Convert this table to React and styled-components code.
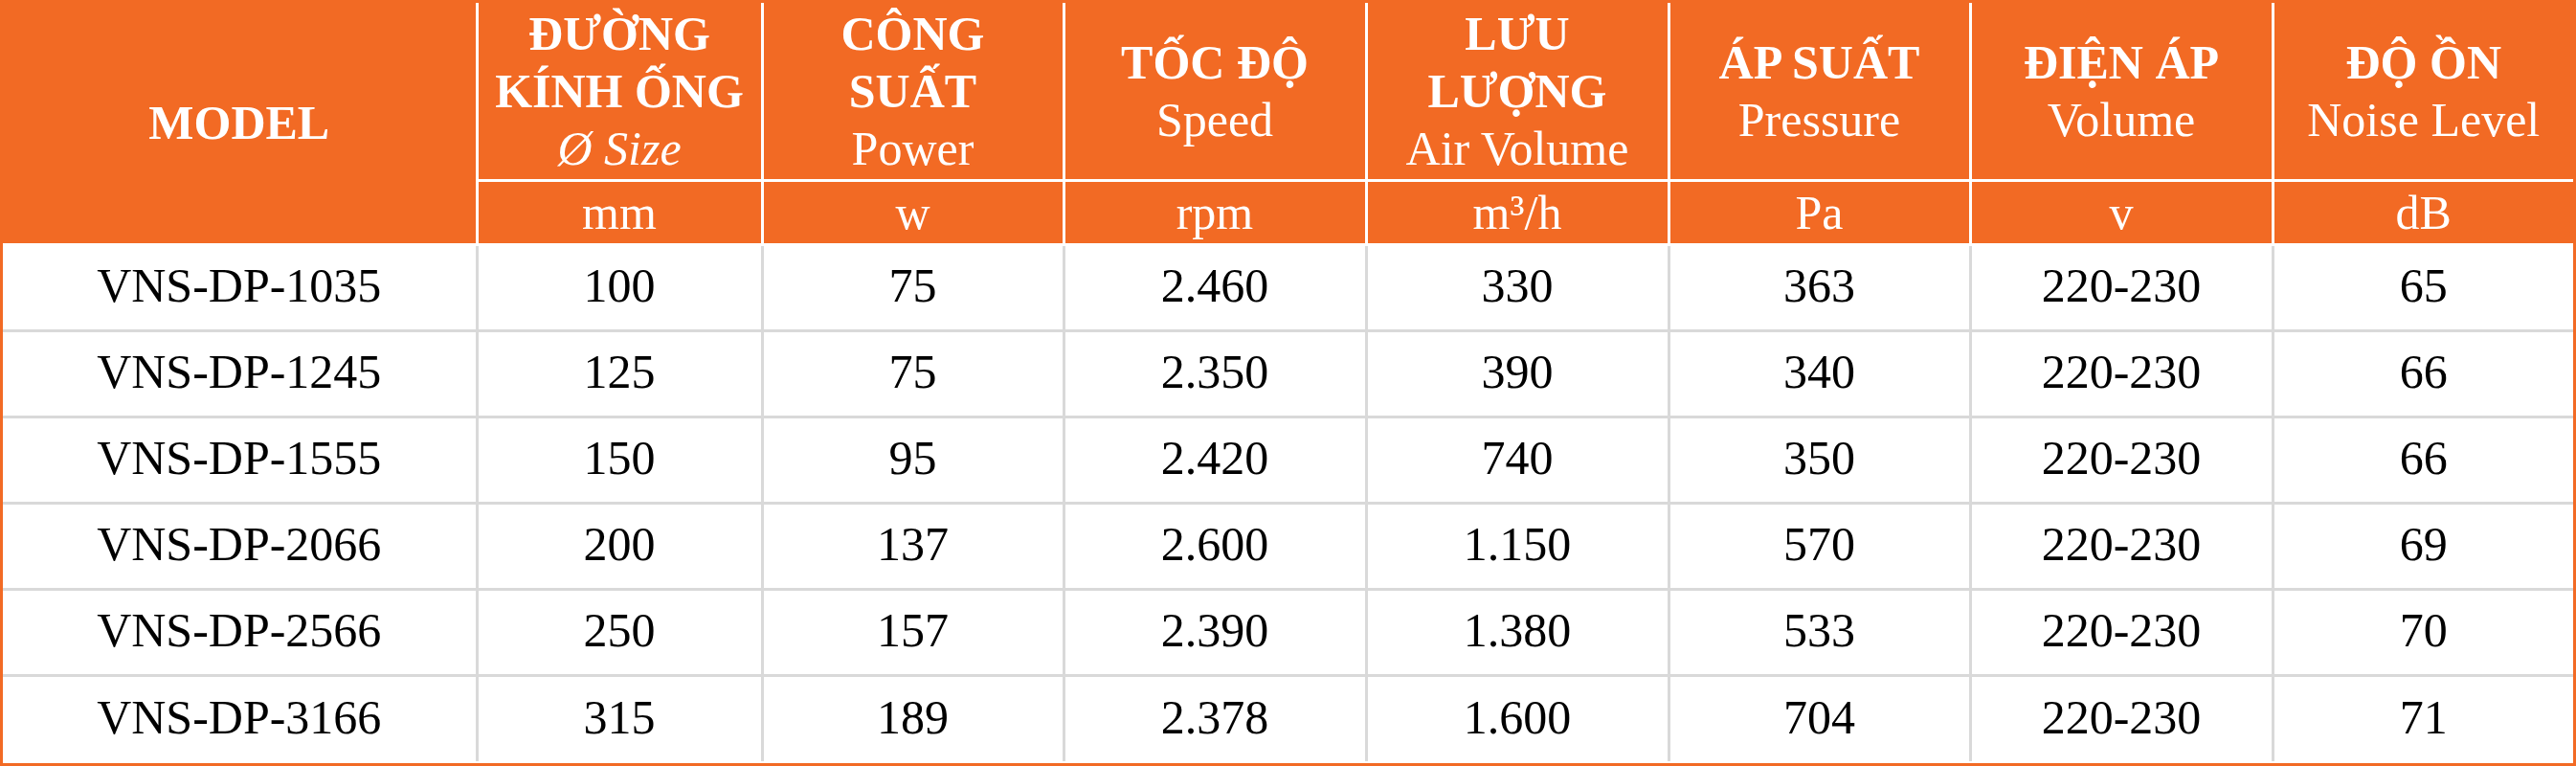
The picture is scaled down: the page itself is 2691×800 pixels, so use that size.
import React from "react";
import styled, { createGlobalStyle } from "styled-components";

const ORANGE = "#f26a24";
const GRID = "#d9d9d9";

const GlobalStyle = createGlobalStyle`
  html, body {
    margin: 0;
    padding: 0;
    background: #ffffff;
  }
`;

const columns = [495, 298, 315, 316, 316, 315, 316, 314];

const heads = [
  { title: ["ĐƯỜNG", "KÍNH ỐNG"], sub: "Ø Size", italic: true, unit: "mm" },
  { title: ["CÔNG", "SUẤT"], sub: "Power", unit: "w" },
  { title: ["TỐC ĐỘ"], sub: "Speed", unit: "rpm" },
  { title: ["LƯU", "LƯỢNG"], sub: "Air Volume", unit: "m³/h" },
  { title: ["ÁP SUẤT"], sub: "Pressure", unit: "Pa" },
  { title: ["ĐIỆN ÁP"], sub: "Volume", unit: "v" },
  { title: ["ĐỘ ỒN"], sub: "Noise Level", unit: "dB" },
];

const rows = [
  ["VNS-DP-1035", "100", "75", "2.460", "330", "363", "220-230", "65"],
  ["VNS-DP-1245", "125", "75", "2.350", "390", "340", "220-230", "66"],
  ["VNS-DP-1555", "150", "95", "2.420", "740", "350", "220-230", "66"],
  ["VNS-DP-2066", "200", "137", "2.600", "1.150", "570", "220-230", "69"],
  ["VNS-DP-2566", "250", "157", "2.390", "1.380", "533", "220-230", "70"],
  ["VNS-DP-3166", "315", "189", "2.378", "1.600", "704", "220-230", "71"],
];

export default function App() {
  return (
    <>
      <GlobalStyle />
      <Frame>
        <SpecTable>
          <colgroup>
            {columns.map((w, i) => (
              <col key={i} style={{ width: w }} />
            ))}
          </colgroup>
          <thead>
            <TitleRow>
              <HeadCell rowSpan={2}>
                <Bold>MODEL</Bold>
              </HeadCell>
              {heads.map((h) => (
                <HeadCell key={h.unit}>
                  {h.title.map((t) => (
                    <Bold key={t}>{t}</Bold>
                  ))}
                  <Sub $italic={h.italic}>{h.sub}</Sub>
                </HeadCell>
              ))}
            </TitleRow>
            <UnitRow>
              {heads.map((h) => (
                <HeadCell key={h.unit}>{h.unit}</HeadCell>
              ))}
            </UnitRow>
          </thead>
          <tbody>
            {rows.map((r) => (
              <DataRow key={r[0]}>
                {r.map((v, i) => (
                  <DataCell key={i}>{v}</DataCell>
                ))}
              </DataRow>
            ))}
          </tbody>
        </SpecTable>
      </Frame>
    </>
  );
}

const Frame = styled.div`
  width: 2691px;
  height: 800px;
  box-sizing: border-box;
  border: 3px solid ${ORANGE};
  background: #ffffff;
  overflow: hidden;
`;

const SpecTable = styled.table`
  width: 100%;
  table-layout: fixed;
  border-collapse: collapse;
  font-family: "Liberation Serif", "Times New Roman", serif;
  font-size: 50px;
  line-height: 60px;
`;

const TitleRow = styled.tr`
  height: 185px;
`;

const UnitRow = styled.tr`
  height: 67px;
`;

const DataRow = styled.tr`
  height: 90px;
`;

const HeadCell = styled.th`
  background: ${ORANGE};
  color: #ffffff;
  font-weight: normal;
  text-align: center;
  vertical-align: middle;
  padding: 0;
  border: 3px solid #ffffff;

  tr:first-child > & {
    border-top: none;
  }
  &:first-child {
    border-left: none;
  }
  &:last-child {
    border-right: none;
  }
`;

const Bold = styled.div`
  font-weight: bold;
`;

const Sub = styled.div`
  font-style: ${(p) => (p.$italic ? "italic" : "normal")};
`;

const DataCell = styled.td`
  color: #000000;
  text-align: center;
  vertical-align: middle;
  padding: 0 0 4px;
  border: 3px solid ${GRID};

  tr:first-child > & {
    border-top: 3px solid #ffffff;
  }
  tr:last-child > & {
    border-bottom: none;
  }
  &:first-child {
    border-left: none;
  }
  &:last-child {
    border-right: none;
  }
`;
